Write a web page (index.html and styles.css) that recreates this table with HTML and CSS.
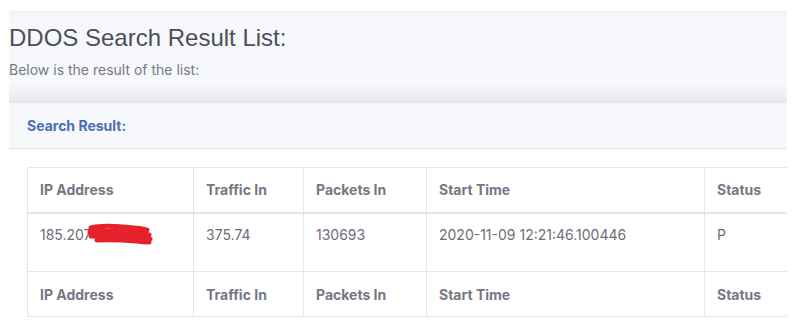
FILE: index.html
```html
<!DOCTYPE html>
<html lang="en">
<head>
    <meta charset="UTF-8">
    <title>DDOS Search Result List</title>
    <link rel="stylesheet" href="styles.css">
</head>
<body>
    <div class="page">
        <div class="page-header">
            <h1>DDOS Search Result List:</h1>
            <p>Below is the result of the list:</p>
        </div>

        <div class="card-header">
            <h6>Search Result:</h6>
        </div>

        <div class="table-wrap">
            <table class="result-table">
                <thead>
                    <tr>
                        <th class="col-ip">IP Address</th>
                        <th class="col-traffic">Traffic In</th>
                        <th class="col-packets">Packets In</th>
                        <th class="col-time">Start Time</th>
                        <th class="col-status">Status</th>
                    </tr>
                </thead>
                <tbody>
                    <tr>
                        <td><span class="ip">185.207<svg class="scribble" width="66" height="22" viewBox="0 0 66 22"><path d="M4 5 C 14 2, 26 3, 36 4 C 46 5, 54 5, 60 7 M3 9 C 16 7, 30 8, 44 9 C 52 10, 58 11, 62 12 M4 13 C 18 12, 32 13, 46 14 C 54 15, 60 15, 63 16 M10 17 C 24 16, 38 17, 50 18 C 56 19, 60 19, 62 19" fill="none" stroke="#e5212b" stroke-width="5" stroke-linecap="round"/></svg></span></td>
                        <td>375.74</td>
                        <td>130693</td>
                        <td>2020-11-09 12:21:46.100446</td>
                        <td>P</td>
                    </tr>
                </tbody>
                <tfoot>
                    <tr>
                        <th>IP Address</th>
                        <th>Traffic In</th>
                        <th>Packets In</th>
                        <th>Start Time</th>
                        <th>Status</th>
                    </tr>
                </tfoot>
            </table>
        </div>
    </div>
</body>
</html>
```

FILE: styles.css
```css
* {
    margin: 0;
    padding: 0;
    box-sizing: border-box;
}

body {
    font-family: Inter, "Liberation Sans", sans-serif;
    background: #fff;
    color: #6e707e;
}

.page {
    width: 778px;
    margin: 11px 0 0 9px;
    overflow: hidden;
}

.page-header {
    height: 92px;
    padding-top: 13px;
    background: linear-gradient(180deg, #f1f2f6 0%, #f7f8fc 8%, #f7f8fc 78%, #eeeff3 92%, #e6e7ec 100%);
}

.page-header h1 {
    font-family: "Liberation Sans", Arial, sans-serif;
    font-size: 24px;
    font-weight: 400;
    color: #4d4f58;
    line-height: 28px;
}

.page-header p {
    margin-top: 9px;
    font-size: 14px;
    color: #767882;
}

.card-header {
    height: 46px;
    padding: 0 18px;
    display: flex;
    align-items: center;
    background: #f7f8fc;
    border-bottom: 1px solid #e3e5ea;
    box-shadow: 0 1px 2px rgba(0, 0, 0, 0.04);
}

.card-header h6 {
    font-size: 14px;
    font-weight: 700;
    color: #4a6db5;
}

.table-wrap {
    padding: 18px 0 0 18px;
}

.result-table {
    border-collapse: collapse;
    table-layout: fixed;
    width: 800px;
    font-size: 14px;
}

.result-table th,
.result-table td {
    border: 1px solid #e5e6eb;
    text-align: left;
    padding: 0 12px;
}

.result-table th {
    height: 45px;
    font-weight: 700;
    color: #767884;
}

.result-table thead th {
    border-bottom: 2px solid #e5e6eb;
}

.result-table td {
    height: 59px;
    vertical-align: top;
    padding-top: 12px;
    color: #6c6e78;
}

.col-ip { width: 166px; }
.col-traffic { width: 110px; }
.col-packets { width: 123px; }
.col-time { width: 278px; }
.col-status { width: 123px; }

.ip {
    position: relative;
}

.scribble {
    position: absolute;
    left: 47px;
    top: -3px;
}
```
